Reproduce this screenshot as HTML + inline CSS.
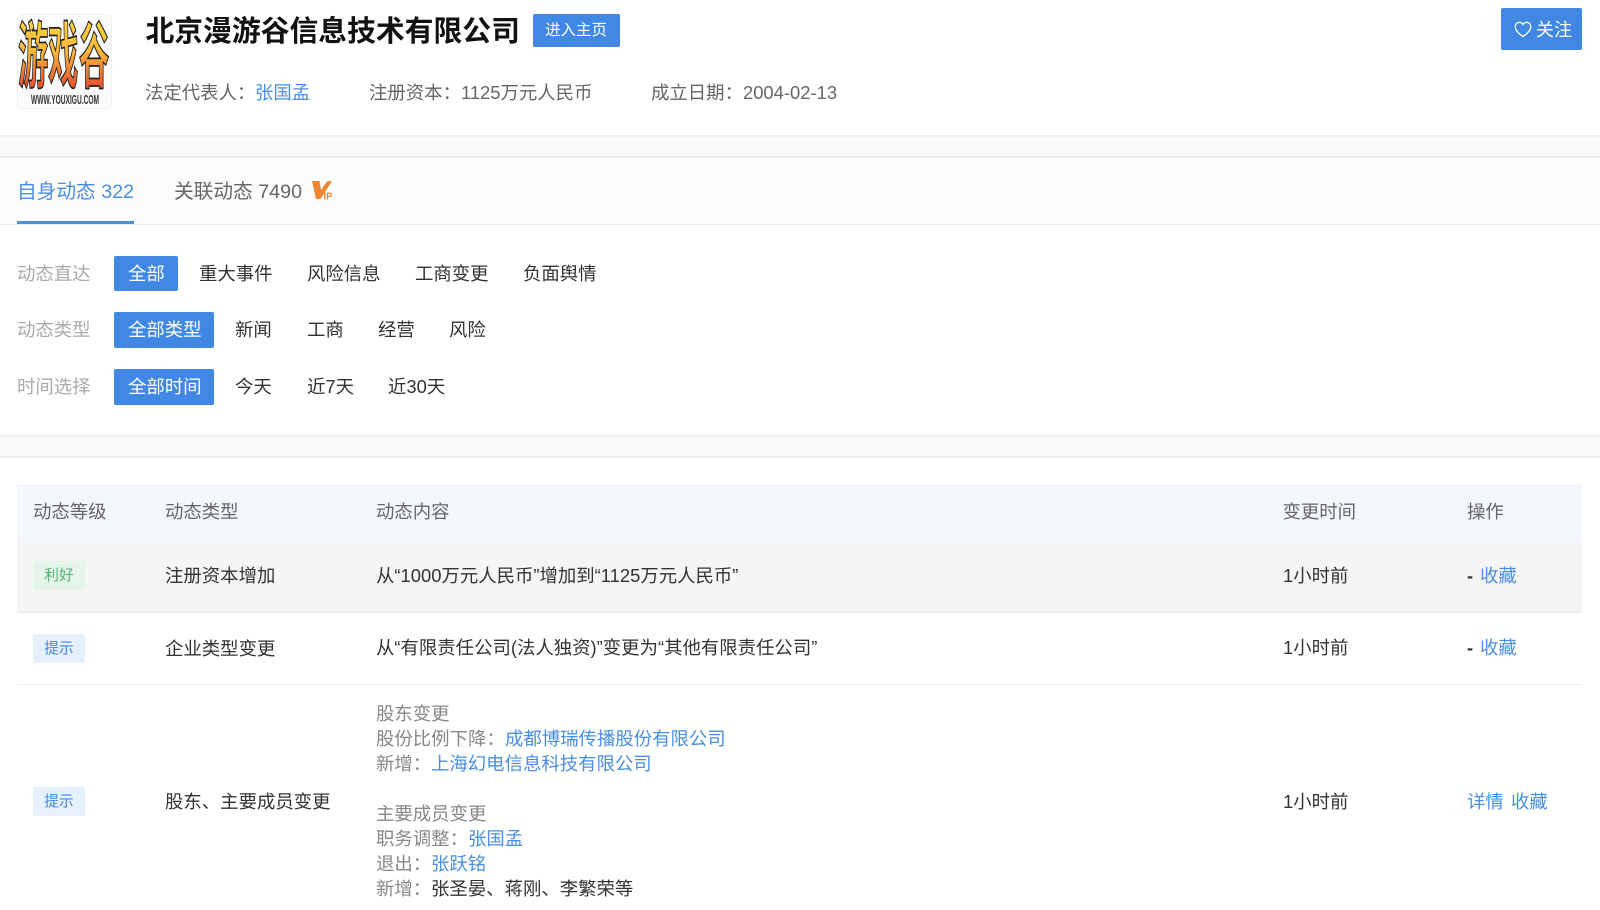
<!DOCTYPE html>
<html lang="zh"><head><meta charset="utf-8"><title>北京漫游谷信息技术有限公司</title>
<style>
*{box-sizing:border-box;margin:0;padding:0}
html,body{width:1600px;height:910px;overflow:hidden;background:#fff}
body{position:relative;font-family:"Liberation Sans","Noto Sans CJK SC",sans-serif;font-size:18.4px;color:#333}
.a{position:absolute;white-space:nowrap;line-height:26px}
.box{position:absolute}
.g{color:#aaa}.m{color:#666}.k{color:#333}.b{color:#4a8fe2}.w{color:#fff}
.btn{position:absolute;background:#4088e4;border-radius:2px}
.tag{position:absolute;left:33px;width:52px;height:29px;line-height:31px;text-align:center;font-size:14.7px;border-radius:2px}
</style></head><body>

<!-- header -->
<svg class="box" style="left:17px;top:14px" width="95" height="95" viewBox="0 0 95 95">
<defs><linearGradient id="lg" x1="0" y1="0" x2="0" y2="1"><stop offset="0" stop-color="#ffe84a"/><stop offset=".5" stop-color="#fbb838"/><stop offset=".8" stop-color="#ea5a30"/><stop offset="1" stop-color="#c8383c"/></linearGradient></defs>
<rect x=".5" y=".5" width="94" height="94" rx="4" fill="#fbfbfb" stroke="#f0f0f0"/>
<g font-family="'Noto Sans CJK SC',sans-serif" font-weight="700" fill="url(#lg)" stroke="#222" stroke-width=".8">
<text transform="translate(1,68) scale(.92,2.2)" font-size="33">游</text>
<text transform="translate(31,68) scale(.92,2.2)" font-size="33">戏</text>
<text transform="translate(62,68) scale(.92,2.2)" font-size="33">谷</text>
</g>
<text transform="translate(48,90) scale(1,1.500)" text-anchor="middle" font-family="'Liberation Sans',sans-serif" font-size="8.500" font-weight="700" fill="#333" textLength="68" lengthAdjust="spacingAndGlyphs">WWW.YOUXIGU.COM</text>
</svg>

<div class="a" style="left:145.5px;top:13px;font-size:28.8px;line-height:38px;font-weight:700;color:#111">北京漫游谷信息技术有限公司</div>
<div class="btn" style="left:533px;top:14px;width:87px;height:33px"></div>
<div class="a w" style="left:545px;top:18px;font-size:15.5px">进入主页</div>
<div class="a m" style="left:145px;top:80px">法定代表人：</div>
<div class="a b" style="left:255px;top:80px">张国孟</div>
<div class="a m" style="left:369px;top:80px">注册资本：<span>1125万元人民币</span></div>
<div class="a m" style="left:651px;top:80px">成立日期：<span>2004-02-13</span></div>

<div class="btn" style="left:1501px;top:8px;width:81px;height:42px"></div>
<svg class="box" style="left:1514px;top:21px" width="18" height="17" viewBox="0 0 18 17"><path d="M9 15.6C5.2 12.6 1.3 9.8 1.3 5.6 1.3 3 3.2 1.3 5.3 1.3c1.6 0 2.9.8 3.7 2.2.8-1.4 2.1-2.2 3.7-2.2 2.1 0 4 1.7 4 4.3 0 4.2-3.900 7-7.700 10z" fill="none" stroke="#fff" stroke-width="1.300"/></svg>
<div class="a w" style="left:1536px;top:17px;font-size:18px">关注</div>

<!-- band 1 -->
<div class="box" style="left:0;top:135px;width:1600px;height:23px;background:#f8f9fb;border-top:2px solid #eeeff1;border-bottom:2px solid #eeeff1"></div>

<!-- tabs -->
<div class="box" style="left:0;top:158px;width:1600px;height:67px;background:#fcfcfd;border-bottom:1px solid #ebebeb"></div>
<div class="a b" style="left:17px;top:178.500px;font-size:19.7px">自身动态 322</div>
<div class="box" style="left:17px;top:221px;width:117px;height:3px;background:#4a8fe2"></div>
<div class="a m" style="left:174px;top:178.500px;font-size:19.7px">关联动态 7490</div>
<svg class="box" style="left:312px;top:180px" width="22" height="20" viewBox="0 0 22 20"><path d="M0 1h7.500l1.500 9L15.500 1H20L8.500 19H4z" fill="#f0862f"/><text x="11.500" y="19.500" font-family="'Liberation Sans',sans-serif" font-size="10.500" font-weight="700" fill="#f0862f" textLength="9" lengthAdjust="spacingAndGlyphs">IP</text></svg>

<!-- filters -->
<div class="a g" style="left:17px;top:260.500px">动态直达</div>
<div class="btn" style="left:114px;top:256px;width:64px;height:35px"></div>
<div class="a w" style="left:128px;top:260.500px">全部</div>
<div class="a k" style="left:199px;top:260.500px">重大事件</div>
<div class="a k" style="left:307px;top:260.500px">风险信息</div>
<div class="a k" style="left:415px;top:260.500px">工商变更</div>
<div class="a k" style="left:523px;top:260.500px">负面舆情</div>

<div class="a g" style="left:17px;top:317px">动态类型</div>
<div class="btn" style="left:114px;top:312px;width:100px;height:36px"></div>
<div class="a w" style="left:128px;top:317px">全部类型</div>
<div class="a k" style="left:235px;top:317px">新闻</div>
<div class="a k" style="left:307px;top:317px">工商</div>
<div class="a k" style="left:378px;top:317px">经营</div>
<div class="a k" style="left:449px;top:317px">风险</div>

<div class="a g" style="left:17px;top:374px">时间选择</div>
<div class="btn" style="left:114px;top:369px;width:100px;height:36px"></div>
<div class="a w" style="left:128px;top:374px">全部时间</div>
<div class="a k" style="left:235px;top:374px">今天</div>
<div class="a k" style="left:307px;top:374px">近7天</div>
<div class="a k" style="left:388px;top:374px">近30天</div>

<!-- band 2 -->
<div class="box" style="left:0;top:435px;width:1600px;height:23px;background:#f8f9fb;border-top:2px solid #eeeff1;border-bottom:2px solid #eeeff1"></div>

<!-- table -->
<div class="box" style="left:17px;top:484px;width:1565px;height:57px;background:#f4f8fd"></div>
<div class="box" style="left:17px;top:541px;width:1565px;height:72px;background:#f5f5f5;border-bottom:2px solid #efefef"></div>
<div class="box" style="left:17px;top:684px;width:1565px;height:1px;background:#ececec"></div>

<div class="a m" style="left:33px;top:499px">动态等级</div>
<div class="a m" style="left:165px;top:499px">动态类型</div>
<div class="a m" style="left:376px;top:499px">动态内容</div>
<div class="a m" style="left:1282.500px;top:499px">变更时间</div>
<div class="a m" style="left:1467px;top:499px">操作</div>

<div class="tag" style="top:561px;background:#e5f5ea;color:#55b372">利好</div>
<div class="a k" style="left:165px;top:563px">注册资本增加</div>
<div class="a k" style="left:376px;top:563px">从“1000万元人民币”增加到“1125万元人民币”</div>
<div class="a k" style="left:1283px;top:563px">1小时前</div>
<div class="a k" style="left:1467px;top:563px;font-weight:700">-</div>
<div class="a b" style="left:1480px;top:563px">收藏</div>

<div class="tag" style="top:634px;background:#e6f1fd;color:#4289e0">提示</div>
<div class="a k" style="left:165px;top:635.500px">企业类型变更</div>
<div class="a k" style="left:376px;top:635px">从“有限责任公司(法人独资)”变更为“其他有限责任公司”</div>
<div class="a k" style="left:1283px;top:635px">1小时前</div>
<div class="a k" style="left:1467px;top:635px;font-weight:700">-</div>
<div class="a b" style="left:1480px;top:635px">收藏</div>

<div class="tag" style="top:787px;background:#e6f1fd;color:#4289e0">提示</div>
<div class="a k" style="left:165px;top:788.500px">股东、主要成员变更</div>
<div class="a k" style="left:1283px;top:788.500px">1小时前</div>
<div class="a b" style="left:1467px;top:788.500px">详情</div>
<div class="a b" style="left:1511px;top:788.500px">收藏</div>

<div class="a" style="left:376px;top:700.500px;color:#888">股东变更</div>
<div class="a" style="left:376px;top:725.500px;color:#888">股份比例下降：</div>
<div class="a b" style="left:505px;top:725.500px">成都博瑞传播股份有限公司</div>
<div class="a" style="left:376px;top:750.500px;color:#888">新增：</div>
<div class="a b" style="left:431px;top:750.500px">上海幻电信息科技有限公司</div>
<div class="a" style="left:376px;top:800.500px;color:#888">主要成员变更</div>
<div class="a" style="left:376px;top:826px;color:#888">职务调整：</div>
<div class="a b" style="left:468px;top:826px">张国孟</div>
<div class="a" style="left:376px;top:851px;color:#888">退出：</div>
<div class="a b" style="left:431px;top:851px">张跃铭</div>
<div class="a" style="left:376px;top:876px;color:#888">新增：</div>
<div class="a k" style="left:431px;top:876px">张圣晏、蒋刚、李繁荣等</div>
</body></html>
